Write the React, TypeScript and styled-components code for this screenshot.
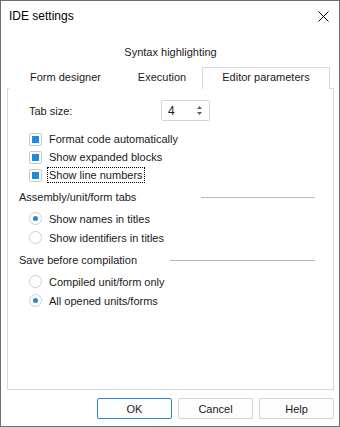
import React from 'react'
import styled, { createGlobalStyle } from 'styled-components'

const GlobalStyle = createGlobalStyle`
  html, body {
    margin: 0;
    padding: 0;
    background: #ffffff;
  }
  * {
    box-sizing: border-box;
  }
`

const Window = styled.div`
  width: 340px;
  height: 427px;
  border: 1px solid #6e6e6e;
  background: #ffffff;
  display: flex;
  flex-direction: column;
  font-family: "Liberation Sans", Arial, sans-serif;
  font-size: 11px;
  color: #1a1a1a;
`

const TitleBar = styled.div`
  height: 30px;
  display: flex;
  align-items: center;
  justify-content: space-between;
  padding: 0 10px 0 8px;
  font-size: 12px;
  color: #000;
`

const CloseButton = styled.div`
  width: 12px;
  height: 12px;
  display: flex;
  align-items: center;
  justify-content: center;
`

const Body = styled.div`
  padding: 0 5px 0 6px;
  display: flex;
  flex-direction: column;
`

const BackTabRow = styled.div`
  margin-top: 10px;
  height: 22px;
  line-height: 22px;
  text-align: center;
`

const FrontTabRow = styled.div`
  margin-top: 4px;
  margin-bottom: -1px;
  height: 22px;
  display: flex;
  padding-left: 2px;
`

const Tab = styled.div<{ $width: number; $active?: boolean }>`
  width: ${p => p.$width}px;
  height: 22px;
  line-height: 18px;
  text-align: center;
  background: #ffffff;
  border: 1px solid ${p => (p.$active ? '#d9d9d9' : 'transparent')};
  border-bottom: none;
  position: relative;
  z-index: 1;
`

const Panel = styled.div`
  height: 302px;
  border: 1px solid #d9d9d9;
  padding: 11px 18px 0 0;
  display: flex;
  flex-direction: column;
`

const SizeRow = styled.div`
  display: flex;
  align-items: center;
  height: 21px;
  padding-left: 21px;
`

const SizeLabel = styled.div`
  width: 132px;
`

const Spinner = styled.div`
  width: 49px;
  height: 21px;
  border: 1px solid #d5d5d5;
  border-radius: 2px;
  display: flex;
  align-items: center;
  justify-content: space-between;
  padding: 0 6px 0 6px;
  font-size: 12px;
`

const Option = styled.div<{ $top?: number }>`
  display: flex;
  align-items: center;
  height: 18px;
  padding-left: 21px;
  margin-top: ${p => p.$top ?? 0}px;
`

const RadioOption = styled(Option)`
  height: 19px;
`

const CheckBox = styled.span`
  width: 13px;
  height: 13px;
  border: 1px solid #c9c9c9;
  border-radius: 2px;
  display: flex;
  align-items: center;
  justify-content: center;
  margin-right: 6px;
  flex: none;

  &::after {
    content: '';
    width: 7px;
    height: 7px;
    background: #218bd6;
  }
`

const Radio = styled.span<{ $checked?: boolean }>`
  width: 13px;
  height: 13px;
  border: 1px solid #cfcfcf;
  border-radius: 50%;
  display: flex;
  align-items: center;
  justify-content: center;
  margin-right: 6px;
  flex: none;

  &::after {
    content: '';
    width: 5px;
    height: 5px;
    border-radius: 50%;
    background: ${p => (p.$checked ? '#218bd6' : 'transparent')};
  }
`

const OptionText = styled.span<{ $focused?: boolean }>`
  line-height: 14px;
  padding: 0 1px;
  margin-left: -1px;
  border: 1px dotted ${p => (p.$focused ? '#000' : 'transparent')};
`

const GroupHeader = styled.div<{ $top: number; $lineStart: number }>`
  display: flex;
  align-items: center;
  height: 19px;
  margin-top: ${p => p.$top}px;
  padding-left: 11px;

  span {
    width: ${p => p.$lineStart}px;
    flex: none;
  }

  &::after {
    content: '';
    flex: 1;
    height: 1px;
    background: #b9b9b9;
    margin-top: 1px;
  }
`

const Footer = styled.div`
  display: flex;
  justify-content: flex-end;
  gap: 6px;
  margin-top: 8px;
`

const Button = styled.div<{ $primary?: boolean }>`
  width: 75px;
  height: 21px;
  border: 1px solid ${p => (p.$primary ? '#2f86d2' : '#d3d3d3')};
  border-radius: 2px;
  background: #fdfdfd;
  display: flex;
  align-items: center;
  justify-content: center;
  font-size: 11px;
  color: #1a1a1a;
`

const SpinArrows = () => (
  <svg width="7" height="11" viewBox="0 0 7 11">
    <path d="M3.5 1 L6 4 L1 4 Z" fill="#606060" />
    <path d="M3.5 10 L6 7 L1 7 Z" fill="#606060" />
  </svg>
)

export default function App() {
  return (
    <>
      <GlobalStyle />
      <Window>
        <TitleBar>
          <span>IDE settings</span>
          <CloseButton>
            <svg width="11" height="11" viewBox="0 0 11 11">
              <path d="M0.5 0.5 L10.5 10.5 M10.5 0.5 L0.5 10.5" stroke="#000" strokeWidth="1" />
            </svg>
          </CloseButton>
        </TitleBar>
        <Body>
          <BackTabRow>Syntax highlighting</BackTabRow>
          <FrontTabRow>
            <Tab $width={113}>Form designer</Tab>
            <Tab $width={80}>Execution</Tab>
            <Tab $width={128} $active>Editor parameters</Tab>
          </FrontTabRow>
          <Panel>
            <SizeRow>
              <SizeLabel>Tab size:</SizeLabel>
              <Spinner>
                <span>4</span>
                <SpinArrows />
              </Spinner>
            </SizeRow>
            <Option $top={9}>
              <CheckBox />
              <OptionText>Format code automatically</OptionText>
            </Option>
            <Option>
              <CheckBox />
              <OptionText>Show expanded blocks</OptionText>
            </Option>
            <Option>
              <CheckBox />
              <OptionText $focused>Show line numbers</OptionText>
            </Option>
            <GroupHeader $top={3} $lineStart={182}>
              <span>Assembly/unit/form tabs</span>
            </GroupHeader>
            <RadioOption $top={3}>
              <Radio $checked />
              <OptionText>Show names in titles</OptionText>
            </RadioOption>
            <RadioOption>
              <Radio />
              <OptionText>Show identifiers in titles</OptionText>
            </RadioOption>
            <GroupHeader $top={3} $lineStart={151}>
              <span>Save before compilation</span>
            </GroupHeader>
            <RadioOption $top={3}>
              <Radio />
              <OptionText>Compiled unit/form only</OptionText>
            </RadioOption>
            <RadioOption>
              <Radio $checked />
              <OptionText>All opened units/forms</OptionText>
            </RadioOption>
          </Panel>
          <Footer>
            <Button $primary>OK</Button>
            <Button>Cancel</Button>
            <Button>Help</Button>
          </Footer>
        </Body>
      </Window>
    </>
  )
}
